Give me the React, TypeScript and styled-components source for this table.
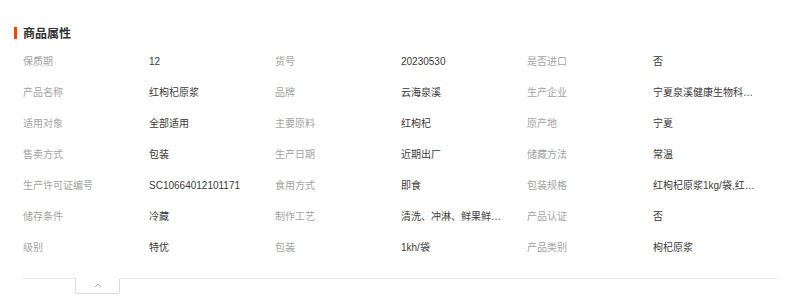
import React from "react";
import styled, { createGlobalStyle } from "styled-components";

const GlobalStyle = createGlobalStyle`
  html, body { margin: 0; padding: 0; background: #fff; }
  body { font-family: "Liberation Sans", Arial, "Noto Sans CJK SC", sans-serif; }
`;

const Page = styled.div`
  width: 792px;
  height: 300px;
  padding-top: 27px;
  box-sizing: border-box;
  background: #fff;
`;

const Header = styled.div`
  display: flex;
  align-items: center;
  gap: 6px;
  padding-left: 14px;
  height: 12px;
`;

const Bar = styled.span`
  width: 3px;
  height: 12px;
  background: #ff4400;
`;

const Title = styled.h2`
  margin: 0;
  font-size: 12px;
  line-height: 12px;
  font-weight: bold;
  color: #333;
  font-family: "Noto Sans CJK SC", sans-serif;
`;

const Grid = styled.div`
  display: grid;
  grid-template-columns: repeat(6, 126px);
  grid-auto-rows: 31px;
  margin: 7px 0 0 23px;
`;

const Cell = styled.div<{ $label?: boolean }>`
  font-size: 10px;
  line-height: 31px;
  color: ${(p) => (p.$label ? "#a3a3a3" : "#3a3a3a")};
  max-width: 103px;
  white-space: nowrap;
  overflow: hidden;
  text-overflow: ellipsis;
`;

const Footer = styled.div`
  width: 754px;
  margin: 15px 0 0 23px;
  border-top: 1px solid #e6e6e6;
`;

const Toggle = styled.button`
  display: flex;
  align-items: flex-start;
  justify-content: center;
  width: 45px;
  height: 16px;
  margin: -1px 0 0 52px;
  padding: 5px 0 0;
  box-sizing: border-box;
  background: #fff;
  border: 1px solid #dcdcdc;
  border-top: none;
  border-radius: 0 0 3px 3px;
  cursor: pointer;
`;

const rows: [string, string][][] = [
  [["保质期", "12"], ["货号", "20230530"], ["是否进口", "否"]],
  [["产品名称", "红枸杞原浆"], ["品牌", "云海泉溪"], ["生产企业", "宁夏泉溪健康生物科技有限公司"]],
  [["适用对象", "全部适用"], ["主要原料", "红枸杞"], ["原产地", "宁夏"]],
  [["售卖方式", "包装"], ["生产日期", "近期出厂"], ["储藏方法", "常温"]],
  [["生产许可证编号", "SC10664012101171"], ["食用方式", "即食"], ["包装规格", "红枸杞原浆1kg/袋,红枸杞原浆"]],
  [["储存条件", "冷藏"], ["制作工艺", "清洗、冲淋、鲜果鲜榨、过滤、灌装"], ["产品认证", "否"]],
  [["级别", "特优"], ["包装", "1kh/袋"], ["产品类别", "枸杞原浆"]],
];

export default function App() {
  return (
    <Page>
      <GlobalStyle />
      <Header>
        <Bar />
        <Title>商品属性</Title>
      </Header>
      <Grid>
        {rows.flatMap((row, i) =>
          row.flatMap(([label, value], j) => [
            <Cell key={`l${i}-${j}`} $label>
              {label}
            </Cell>,
            <Cell key={`v${i}-${j}`} title={value}>
              {value}
            </Cell>,
          ])
        )}
      </Grid>
      <Footer>
        <Toggle aria-label="收起">
          <svg width="8" height="5" viewBox="0 0 8 5">
            <polyline points="1,4 4,1 7,4" fill="none" stroke="#aaa" strokeWidth="1" />
          </svg>
        </Toggle>
      </Footer>
    </Page>
  );
}
